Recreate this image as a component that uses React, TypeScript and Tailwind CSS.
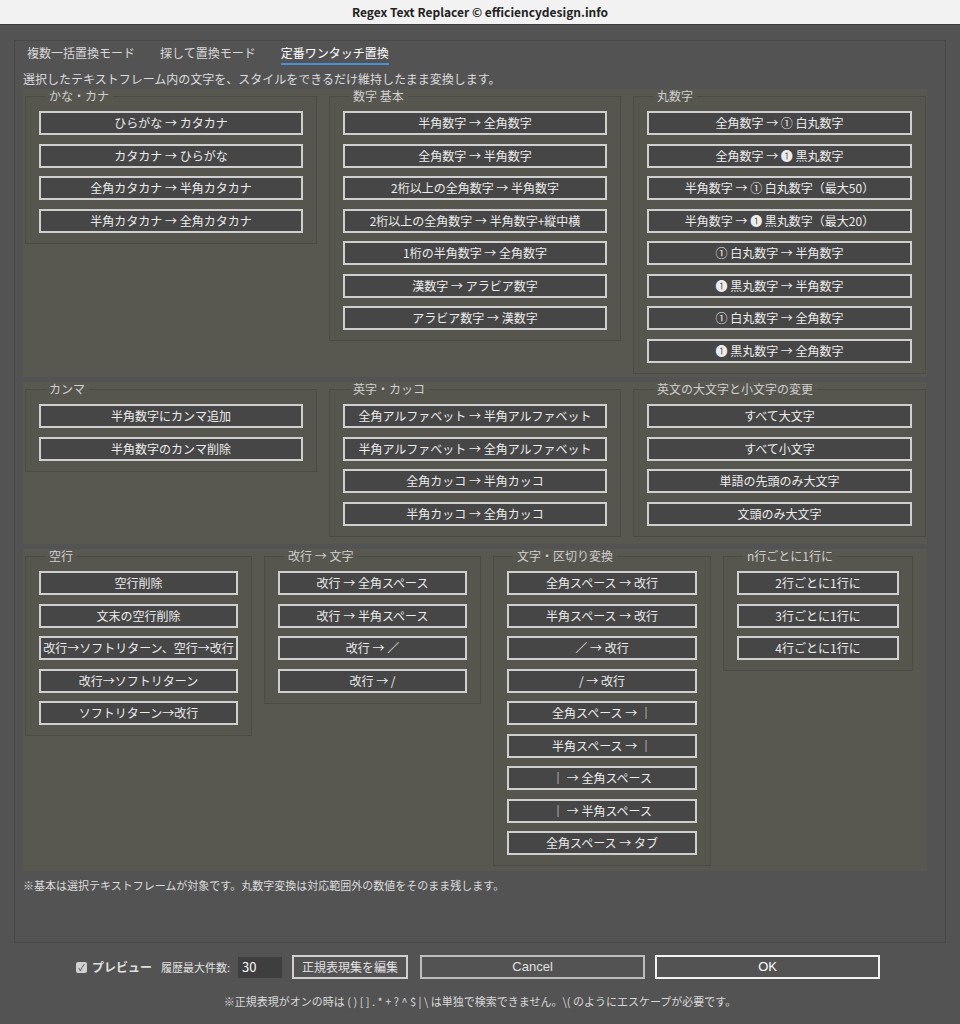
const font = { fontFamily: '"Noto Sans CJK JP", "Liberation Sans", sans-serif' }

type G = { title: string; items: string[]; w: string }

const rows: G[][] = [
  [
    { title: "かな・カナ", w: "w-[292px]", items: ["ひらがな → カタカナ", "カタカナ → ひらがな", "全角カタカナ → 半角カタカナ", "半角カタカナ → 全角カタカナ"] },
    { title: "数字 基本", w: "w-[292px]", items: ["半角数字 → 全角数字", "全角数字 → 半角数字", "2桁以上の全角数字 → 半角数字", "2桁以上の全角数字 → 半角数字+縦中横", "1桁の半角数字 → 全角数字", "漢数字 → アラビア数字", "アラビア数字 → 漢数字"] },
    { title: "丸数字", w: "w-[293px]", items: ["全角数字 → ① 白丸数字", "全角数字 → ❶ 黒丸数字", "半角数字 → ① 白丸数字（最大50）", "半角数字 → ❶ 黒丸数字（最大20）", "① 白丸数字 → 半角数字", "❶ 黒丸数字 → 半角数字", "① 白丸数字 → 全角数字", "❶ 黒丸数字 → 全角数字"] },
  ],
  [
    { title: "カンマ", w: "w-[292px]", items: ["半角数字にカンマ追加", "半角数字のカンマ削除"] },
    { title: "英字・カッコ", w: "w-[292px]", items: ["全角アルファベット → 半角アルファベット", "半角アルファベット → 全角アルファベット", "全角カッコ → 半角カッコ", "半角カッコ → 全角カッコ"] },
    { title: "英文の大文字と小文字の変更", w: "w-[293px]", items: ["すべて大文字", "すべて小文字", "単語の先頭のみ大文字", "文頭のみ大文字"] },
  ],
  [
    { title: "空行", w: "w-[227px]", items: ["空行削除", "文末の空行削除", "改行→ソフトリターン、空行→改行", "改行→ソフトリターン", "ソフトリターン→改行"] },
    { title: "改行 → 文字", w: "w-[217px]", items: ["改行 → 全角スペース", "改行 → 半角スペース", "改行 → ／", "改行 → /"] },
    { title: "文字・区切り変換", w: "w-[218px]", items: ["全角スペース → 改行", "半角スペース → 改行", "／ → 改行", "/ → 改行", "全角スペース → ｜", "半角スペース → ｜", "｜ → 全角スペース", "｜ → 半角スペース", "全角スペース → タブ"] },
    { title: "n行ごとに1行に", w: "w-[190px]", items: ["2行ごとに1行に", "3行ごとに1行に", "4行ごとに1行に"] },
  ],
]

function Group({ g }: { g: G }) {
  return (
    <fieldset className={`${g.w} shrink-0 self-start border border-[#4b4a45] bg-[#56554e] px-[13px] pb-[10px] pt-[8px] flex flex-col gap-[8.5px]`}>
      <legend className="ml-[6px] px-[4px] text-[12px] leading-[14px] text-[#cfcfcf]">{g.title}</legend>
      {g.items.map((t) => (
        <div key={t} className="h-[24px] border-2 border-[#cfcfcf] bg-[#464646] flex items-center justify-center text-[12px] text-[#ececec] whitespace-nowrap">
          {t}
        </div>
      ))}
    </fieldset>
  )
}

export default function App() {
  return (
    <div style={font} className="w-[960px] h-[1024px] bg-[#535353] flex flex-col overflow-hidden">
      <div className="h-[25px] shrink-0 bg-[#f2f2f2] border-b border-[#3a3a3a] flex items-center justify-center text-[12px] font-bold text-[#222]" >
        Regex Text Replacer © efficiencydesign.info
      </div>
      <div className="mx-[14px] mt-[15px] h-[903px] border border-[#484848] bg-[#535353] flex flex-col">
        <div className="flex gap-[25px] px-[12px] pt-[3px] text-[12px] text-[#d8d8d8]">
          <span>複数一括置換モード</span>
          <span>探して置換モード</span>
          <span className="text-white border-b-2 border-[#4a90d9] pb-[1px]">定番ワンタッチ置換</span>
        </div>
        <div className="px-[8px] mt-[5px] text-[12px] text-[#dcdcdc]">選択したテキストフレーム内の文字を、スタイルをできるだけ維持したまま変換します。</div>
        <div className="ml-[8px] w-[904px] flex flex-col gap-[5px] mt-[1px]">
          {rows.map((r, i) => (
            <div key={i} className={`bg-[#585750] flex gap-[12px] pl-[2px] ${i === 0 ? "h-[288px]" : i === 1 ? "h-[162px]" : "h-[322px]"}`}>
              {r.map((g) => <Group key={g.title} g={g} />)}
            </div>
          ))}
        </div>
        <div className="px-[8px] mt-[6px] text-[11px] text-[#dcdcdc]">※基本は選択テキストフレームが対象です。丸数字変換は対応範囲外の数値をそのまま残します。</div>
      </div>
      <div className="mt-[12px] flex items-center pl-[76px] text-[12px] text-[#e0e0e0]">
        <span className="w-[11px] h-[11px] bg-[#d0d0d0] rounded-[2px] flex items-center justify-center text-[9px] text-[#444] leading-none">✓</span>
        <span className="ml-[5px] font-bold">プレビュー</span>
        <span className="ml-[9px] text-[11px]">履歴最大件数:</span>
        <span className="ml-[8px] w-[44px] h-[21px] bg-[#3e3e3e] flex items-center px-[4px] text-[13px] text-white">30</span>
        <span className="ml-[10px] w-[116px] h-[24px] border-2 border-[#cfcfcf] flex items-center justify-center">正規表現集を編集</span>
        <span className="ml-[12px] w-[225px] h-[24px] border-2 border-[#bdbdbd] flex items-center justify-center text-[13px]" style={{ fontFamily: '"Liberation Sans", sans-serif' }}>Cancel</span>
        <span className="ml-[10px] w-[225px] h-[24px] border-2 border-[#f2f2f2] flex items-center justify-center text-[13px] text-white" style={{ fontFamily: '"Liberation Sans", sans-serif' }}>OK</span>
      </div>
      <div className="mt-[14px] text-center text-[11px] text-[#d8d8d8]">※正規表現がオンの時は ( ) [ ] { } . * + ? ^ $ | \ は単独で検索できません。\( のようにエスケープが必要です。</div>
    </div>
  )
}
